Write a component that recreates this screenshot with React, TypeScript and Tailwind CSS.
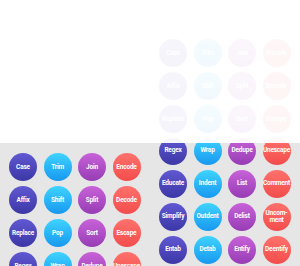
const rows: string[][] = [
	['Case', 'Trim', 'Join', 'Encode'],
	['Affix', 'Shift', 'Split', 'Decode'],
	['Replace', 'Pop', 'Sort', 'Escape'],
	['Regex', 'Wrap', 'Dedupe', 'Unescape'],
	['Educate', 'Indent', 'List', 'Comment'],
	['Simplify', 'Outdent', 'Delist', 'Uncom-\nment'],
	['Entab', 'Detab', 'Entify', 'Deentify'],
];

const colColors = [
	'bg-gradient-to-b from-[#6158d2] to-[#3c37a6]',
	'bg-gradient-to-b from-[#3fd3ff] to-[#1898ef]',
	'bg-gradient-to-b from-[#c862d8] to-[#973cb5]',
	'bg-gradient-to-b from-[#ff716c] to-[#f24c4c]',
];

const ActionGrid = () => {
	return (
		<div className="grid grid-cols-[repeat(4,28px)] gap-x-[6.5px] gap-y-[5px] px-[9px]">
			{rows.flatMap((row) =>
				row.map((label, i) => (
					<div
						key={label}
						className={`flex h-[28px] w-[28px] items-center justify-center rounded-full text-center ${colColors[i]}`}
					>
						<span className="whitespace-pre text-[6.5px] font-bold leading-[7px] tracking-[-0.2px] text-white">
							{label}
						</span>
					</div>
				))
			)}
		</div>
	);
};

export default function App() {
	return (
		<div
			className="grid h-[266px] w-[300px] grid-cols-[150px_150px] grid-rows-[143px_123px] overflow-hidden bg-white"
			style={{ fontFamily: 'Roboto, "Liberation Sans", sans-serif' }}
		>
			<div className="bg-white" />
			<div className="overflow-hidden bg-white pt-[39px]">
				<div className="opacity-[0.05]">
					<ActionGrid />
				</div>
			</div>
			<div className="overflow-hidden bg-[#e6e6e6] pt-[10px]">
				<ActionGrid />
			</div>
			<div className="overflow-hidden bg-[#e6e6e6]">
				<div className="mt-[-105.5px]">
					<ActionGrid />
				</div>
			</div>
		</div>
	);
}
